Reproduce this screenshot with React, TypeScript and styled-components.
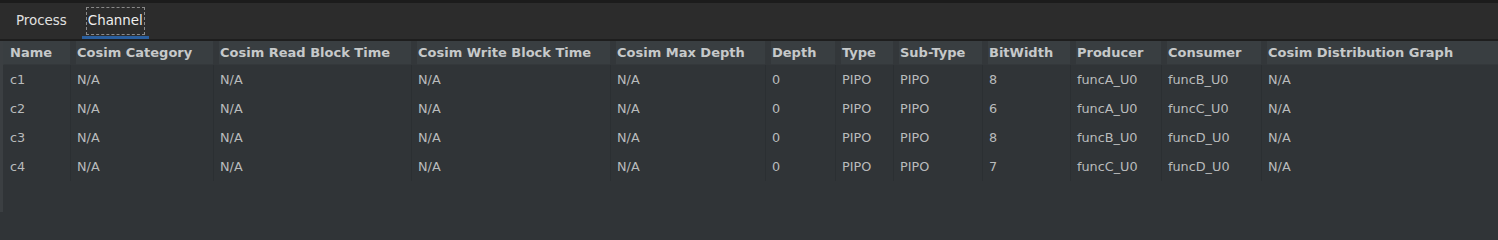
import React from "react";
import styled, { createGlobalStyle } from "styled-components";

const Global = createGlobalStyle`
  html, body { margin: 0; padding: 0; background: #303437; }
  body { font-family: "DejaVu Sans", "Liberation Sans", sans-serif; }
  #root { height: 212px; }
`;

const Frame = styled.div`
  width: 1498px;
  height: 212px;
  display: flex;
  flex-direction: column;
  background: #303437;
  overflow: hidden;
`;

const TabBar = styled.div`
  height: 36px;
  border-top: 3px solid #1c1c1c;
  border-bottom: 2px solid #1e1e1e;
  background: #2c2c2c;
  display: flex;
  align-items: stretch;
  gap: 9px;
  padding-left: 10px;
`;

const Tab = styled.div<{ $active?: boolean }>`
  padding: 4px 4px 0;
  display: flex;
  align-items: flex-start;
  justify-content: center;
  font-size: 13.4px;
  color: ${(p) => (p.$active ? "#eeeeee" : "#e0e0e0")};
  border-bottom: 3px solid ${(p) => (p.$active ? "#2b5f9e" : "transparent")};
  box-sizing: border-box;
`;

const TabLabel = styled.span<{ $focus?: boolean }>`
  display: inline-block;
  height: 28px;
  line-height: 26px;
  padding: 0 1px;
  border: 1px dashed ${(p) => (p.$focus ? "#8a8a8a" : "transparent")};
  box-sizing: border-box;
`;

const Table = styled.div`
  flex: 1;
  display: flex;
  flex-direction: column;
  border-left: 3px solid #3b3f42;
`;

const cols = "67px 143px 198px 199px 155px 70px 58px 89px 88px 91px 100px 1fr";

const HeaderRow = styled.div`
  display: grid;
  grid-template-columns: ${cols};
  height: 24px;
`;

const HeaderCell = styled.div<{ $first?: boolean }>`
  background: #393e41;
  border-left: ${(p) => (p.$first ? "1px" : "6px")} solid ${(p) => (p.$first ? "#393e41" : "#33373a")};
  padding-left: ${(p) => (p.$first ? "6px" : "1px")};
  font-size: 13px;
  font-weight: bold;
  color: #c6c9ca;
  display: flex;
  align-items: center;
  white-space: nowrap;
  overflow: hidden;
  border-bottom: 1px solid #34383b;
`;

const BodyRow = styled.div`
  display: grid;
  grid-template-columns: ${cols};
  height: 29px;
`;

const Cell = styled.div<{ $first?: boolean }>`
  border-left: 1px solid ${(p) => (p.$first ? "transparent" : "#2b2f32")};
  padding-left: 6px;
  font-size: 12.8px;
  color: #b9bbbc;
  display: flex;
  align-items: center;
  white-space: nowrap;
  overflow: hidden;
`;

const Filler = styled.div`
  flex: 1;
`;

const headers = [
  "Name",
  "Cosim Category",
  "Cosim Read Block Time",
  "Cosim Write Block Time",
  "Cosim Max Depth",
  "Depth",
  "Type",
  "Sub-Type",
  "BitWidth",
  "Producer",
  "Consumer",
  "Cosim Distribution Graph",
];

const rows = [
  ["c1", "N/A", "N/A", "N/A", "N/A", "0", "PIPO", "PIPO", "8", "funcA_U0", "funcB_U0", "N/A"],
  ["c2", "N/A", "N/A", "N/A", "N/A", "0", "PIPO", "PIPO", "6", "funcA_U0", "funcC_U0", "N/A"],
  ["c3", "N/A", "N/A", "N/A", "N/A", "0", "PIPO", "PIPO", "8", "funcB_U0", "funcD_U0", "N/A"],
  ["c4", "N/A", "N/A", "N/A", "N/A", "0", "PIPO", "PIPO", "7", "funcC_U0", "funcD_U0", "N/A"],
];

export default function App() {
  return (
    <>
      <Global />
      <Frame>
        <TabBar>
          <Tab>
            <TabLabel>Process</TabLabel>
          </Tab>
          <Tab $active>
            <TabLabel $focus>Channel</TabLabel>
          </Tab>
        </TabBar>
        <Table>
          <HeaderRow>
            {headers.map((h, i) => (
              <HeaderCell key={h} $first={i === 0}>
                {h}
              </HeaderCell>
            ))}
          </HeaderRow>
          {rows.map((r, ri) => (
            <BodyRow key={ri}>
              {r.map((c, ci) => (
                <Cell key={ci} $first={ci === 0}>
                  {c}
                </Cell>
              ))}
            </BodyRow>
          ))}
          <Filler />
        </Table>
      </Frame>
    </>
  );
}
